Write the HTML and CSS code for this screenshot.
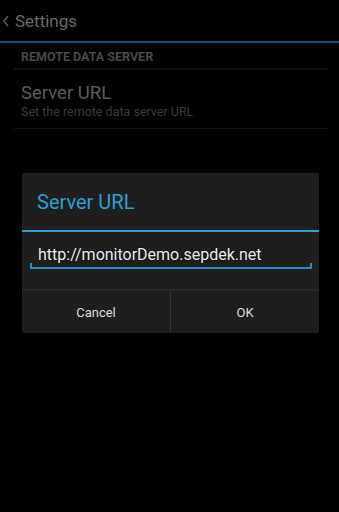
FILE: index.html
```html
<!DOCTYPE html>
<html lang="en">

<head>
    <meta charset="UTF-8">
    <title>Settings</title>
    <link rel="stylesheet" href="styles.css">
</head>

<body>

    <div class="action-bar">
        <svg class="voltar" width="8" height="12" viewBox="0 0 8 12">
            <path d="M6 1 L2 6 L6 11" fill="none" stroke="#5a5a5a" stroke-width="1.6"/>
        </svg>
        <span class="titulo">Settings</span>
    </div>

    <div class="prefs">
        <div class="categoria">REMOTE DATA SERVER</div>
        <div class="pref">
            <div class="pref-titulo">Server URL</div>
            <div class="pref-resumo">Set the remote data server URL</div>
        </div>
    </div>

    <div class="dialogo">
        <div class="dialogo-titulo">Server URL</div>
        <div class="dialogo-corpo">
            <div class="campo">http://monitorDemo.sepdek.net</div>
        </div>
        <div class="botoes">
            <div class="botao">Cancel</div>
            <div class="botao">OK</div>
        </div>
    </div>

</body>

</html>
```

FILE: styles.css
```css
body {
    margin: 0;
    background-color: #000;
    font-family: Roboto, "Noto Sans", sans-serif;
    width: 339px;
    height: 512px;
    overflow: hidden;
}

.action-bar {
    display: flex;
    align-items: center;
    height: 41px;
    border-bottom: 2px solid #1b4e6d;
}

.voltar {
    margin-left: 2px;
    margin-right: 5px;
}

.titulo {
    font-size: 17px;
    color: #6a6a6a;
}

.prefs {
    margin: 0 11px 0 14px;
}

.categoria {
    height: 27px;
    padding: 2px 0 0 7px;
    box-sizing: border-box;
    display: flex;
    align-items: center;
    font-size: 12.5px;
    font-weight: bold;
    color: #4a4a4a;
    border-bottom: 2px solid #141414;
}

.pref {
    height: 59px;
    box-sizing: border-box;
    padding: 4px 0 0 7px;
    display: flex;
    flex-direction: column;
    justify-content: center;
    border-bottom: 1px solid #141414;
}

.pref-titulo {
    font-size: 18.5px;
    color: #5c5c5c;
    line-height: 21px;
}

.pref-resumo {
    font-size: 12.5px;
    color: #3c3c3c;
    line-height: 16px;
}

.dialogo {
    position: absolute;
    left: 22px;
    top: 173px;
    width: 297px;
    height: 160px;
    background-color: #1e1e1e;
    border-radius: 2px;
    display: flex;
    flex-direction: column;
}

.dialogo-titulo {
    height: 59px;
    box-sizing: border-box;
    padding: 1px 0 0 15px;
    display: flex;
    align-items: center;
    font-size: 20px;
    color: #2f9fd8;
    border-bottom: 2px solid #2f9fd8;
}

.dialogo-corpo {
    height: 57px;
    padding: 0 7px 0 8px;
    display: flex;
    align-items: center;
}

.campo {
    flex: 1;
    height: 28px;
    margin-bottom: 12px;
    box-sizing: border-box;
    padding: 3px 0 0 8px;
    font-size: 16px;
    line-height: 22px;
    color: #eeeeee;
    text-shadow: 0 0 2px #000;
    border-bottom: 2px solid #2b8cc4;
    background:
        linear-gradient(#2b8cc4, #2b8cc4) left bottom / 2px 4px no-repeat,
        linear-gradient(#2b8cc4, #2b8cc4) right bottom / 2px 4px no-repeat;
}

.botoes {
    flex: 1;
    display: flex;
    border-top: 2px solid #2a2a2a;
}

.botao {
    flex: 1;
    display: flex;
    align-items: center;
    justify-content: center;
    font-size: 13px;
    color: #dddddd;
}

.botao + .botao {
    border-left: 1px solid #333;
}
```
